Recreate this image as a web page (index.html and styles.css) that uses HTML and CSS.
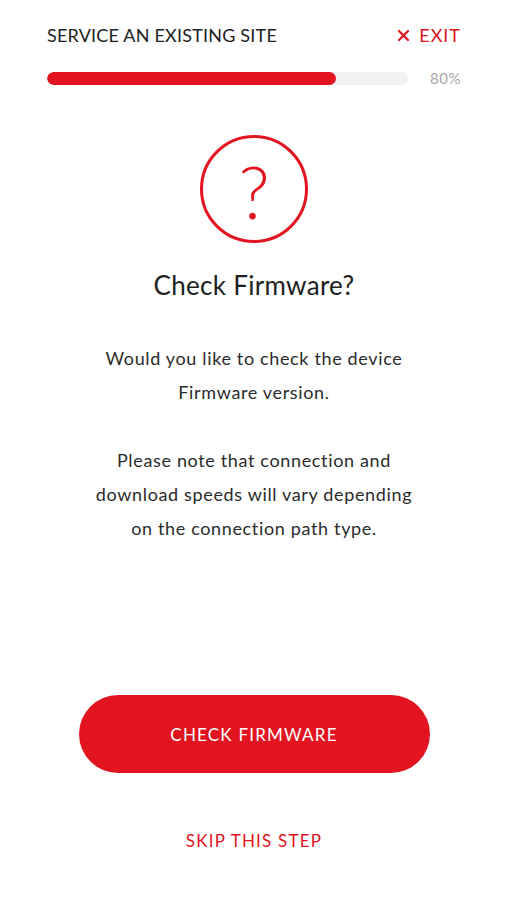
FILE: index.html
```html
<!DOCTYPE html>
<html lang="en">
	<head>
		<meta charset="UTF-8">
		<meta name="viewport" content="width=device-width, initial-scale=1.0">
		<title>Check Firmware</title>
		<link rel="stylesheet" href="styles.css">
	</head>
    <body>
        <section class="wizard">
            <header class="top">
                <div class="top_row">
                    <h1 class="top_title">SERVICE AN EXISTING SITE</h1>
                    <a href="#" class="exit">
                        <svg class="exit_x" width="11" height="11" viewBox="0 0 11 11"><path d="M1 1L10 10M10 1L1 10" stroke="#e2141f" stroke-width="2.2" stroke-linecap="round"/></svg>EXIT
                    </a>
                </div>
                <div class="progress">
                    <div class="track"><div class="fill" style="width:80%"></div></div>
                    <span class="pct">80%</span>
                </div>
            </header>

            <div class="step">
                <div class="icon_circle">?</div>
                <h2 class="step_title">Check Firmware?</h2>
                <p class="step_text">Would you like to check the device<br>Firmware version.</p>
                <p class="step_text">Please note that connection and<br>download speeds will vary depending<br>on the connection path type.</p>
            </div>

            <div class="actions">
                <button type="button" class="btn_main">CHECK FIRMWARE</button>
                <a href="#" class="skip">SKIP THIS STEP</a>
            </div>
        </section>
    </body>
</html>
```

FILE: styles.css
```css
body{padding:0; margin:0; background:#fff;}
.wizard{
    width:507px; height:900px; box-sizing:border-box;
    padding:22px 46px 0 47px;
    font-family:Lato, "Open Sans", sans-serif; color:#222;
    display:flex; flex-direction:column;
}
.top_row{display:flex; justify-content:space-between; align-items:center; height:26px;}
.top_title{margin:0; font-size:18px; font-weight:normal; letter-spacing:0.2px; color:#222;}
.exit{display:flex; align-items:center; color:#e2141f; text-decoration:none; font-size:18px; letter-spacing:1px;}
.exit_x{margin-right:10px;}
.progress{display:flex; align-items:center; margin-top:21px;}
.track{width:361px; height:13px; background:#f1f1f1; border-radius:7px; overflow:hidden;}
.fill{height:100%; background:#e2141f; border-radius:7px;}
.pct{margin-left:auto; font-size:15px; color:#a8a8a8; letter-spacing:0.5px;}

.step{display:flex; flex-direction:column; align-items:center; margin-top:48px;}
.icon_circle{
    width:102px; height:102px; border:3px solid #e2141f; border-radius:50%;
    color:#e2141f; font-size:72px; font-weight:300; line-height:106px; text-align:center;
}
.step_title{margin:26px 0 0; font-size:26px; font-weight:normal; letter-spacing:0.3px; color:#1e1e1e;}
.step_text{margin:40px 0 0; font-size:18px; line-height:34px; letter-spacing:0.65px; text-align:center; color:#2b2b2b;}
.step_text + .step_text{margin-top:34px;}

.actions{display:flex; flex-direction:column; align-items:center; margin-top:auto; padding-bottom:49px;}
.btn_main{
    width:351px; height:78px; border:0; border-radius:39px; background:#e2141f;
    color:#fff; font-family:inherit; font-size:17px; letter-spacing:1.2px; cursor:pointer;
}
.skip{margin-top:57px; color:#e2141f; text-decoration:none; font-size:17px; letter-spacing:1.2px;}
```
